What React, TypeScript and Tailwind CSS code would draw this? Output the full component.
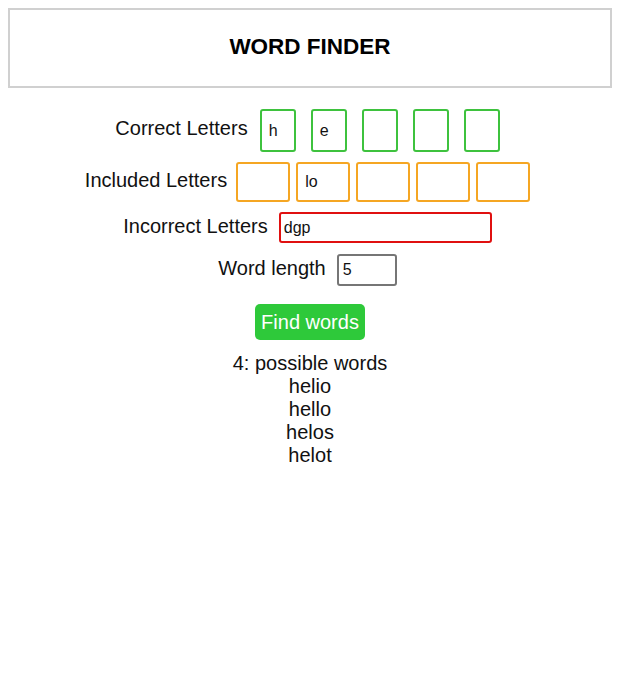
import React from "react";

const correct = ["h", "e", "", "", ""];
const included = ["", "lo", "", "", ""];
const words = ["helio", "hello", "helos", "helot"];

export default function App() {
  return (
    <div className="min-h-[697px] bg-white p-2 font-['Liberation_Sans',Arial,sans-serif] text-[#111]">
      {/* Header */}
      <div className="flex h-20 items-center justify-center border-2 border-[#d0d0d0] pb-[2px]">
        <h1 className="text-[22.5px] font-bold text-black">WORD FINDER</h1>
      </div>

      <div className="mt-[21px] flex flex-col items-center">
        {/* Correct */}
        <div className="flex items-center pr-[5px]">
          <span className="mb-[4px] mr-[12px] text-[20px] leading-[23px]">Correct Letters</span>
          <div className="flex gap-[15px]">
            {correct.map((c, i) => (
              <div
                key={i}
                className="flex h-[43px] w-[36px] items-center rounded-[3px] border-2 border-[#3ec23e] pl-[7px] text-[16px]"
              >
                {c}
              </div>
            ))}
          </div>
        </div>

        {/* Included */}
        <div className="mt-[10px] flex items-center pr-[5px]">
          <span className="mb-[3px] mr-[9px] text-[20px] leading-[23px]">Included Letters</span>
          <div className="flex gap-[6px]">
            {included.map((c, i) => (
              <div
                key={i}
                className="flex h-[40px] w-[54px] items-center rounded-[3px] border-2 border-[#f5a623] pl-[7px] text-[16px]"
              >
                {c}
              </div>
            ))}
          </div>
        </div>

        {/* Incorrect */}
        <div className="mt-[10px] flex items-center pr-[5px]">
          <span className="mb-[3px] mr-[11px] text-[20px] leading-[23px]">Incorrect Letters</span>
          <div className="flex h-[31px] w-[213px] items-center rounded-[3px] border-2 border-[#e01010] pl-[3px] text-[16px]">
            dgp
          </div>
        </div>

        {/* Word length */}
        <div className="mt-[11px] flex items-center pr-[5px]">
          <span className="mb-[4px] mr-[11px] text-[20px] leading-[23px]">Word length</span>
          <div className="flex h-[32px] w-[60px] items-center rounded-[3px] border-2 border-[#767676] pl-[4px] text-[16px]">
            5
          </div>
        </div>

        <button className="mt-[18px] h-[36px] w-[110px] rounded-[5px] bg-[#2ec93a] text-[20px] text-white">
          Find words
        </button>

        {/* Results */}
        <div className="mt-[12px] flex flex-col items-center text-[20px] leading-[23px]">
          <p>{words.length}: possible words</p>
          {words.map((w) => (
            <p key={w}>{w}</p>
          ))}
        </div>
      </div>
    </div>
  );
}
